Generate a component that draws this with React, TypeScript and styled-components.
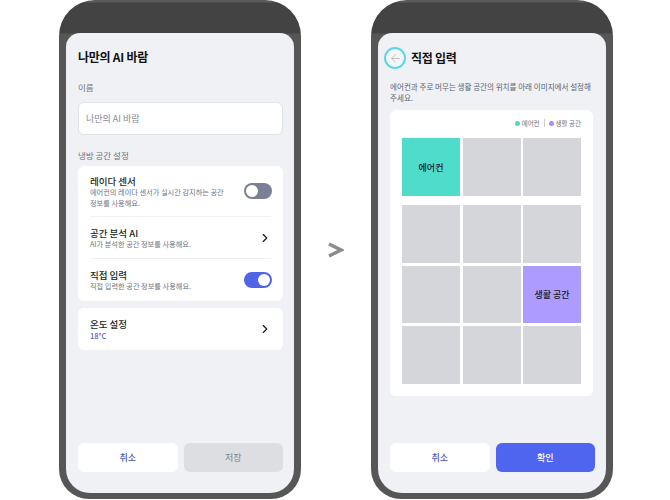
import React from "react";
import styled, { createGlobalStyle } from "styled-components";
import { ChevronRight, ArrowLeft } from "lucide-react";

const GlobalStyle = createGlobalStyle`
  html, body {
    margin: 0;
    padding: 0;
    background: #fff;
    overflow: hidden;
  }
  * {
    box-sizing: border-box;
  }
  body {
    font-family: "Noto Sans CJK KR", "Noto Sans", sans-serif;
    color: #16181d;
  }
`;

const Page = styled.div`
  width: 670px;
  height: 500px;
  display: flex;
  align-items: flex-start;
  padding-left: 59px;
  overflow: hidden;
`;

const Phone = styled.div`
  width: 242px;
  height: 499px;
  flex-shrink: 0;
  padding: 33px 7px 6px;
  border-radius: 36px 36px 30px 30px;
  background: linear-gradient(#5a5a5a 0, #5a5a5a 2px, #434343 3px, #434343 33px, #565656 34px);
`;

const Screen = styled.div`
  height: 460px;
  background: #eff1f5;
  border-radius: 14px 14px 24px 24px;
  display: flex;
  flex-direction: column;
  padding: 0 11px 21px 12px;
`;

const ArrowSlot = styled.div`
  width: 70px;
  height: 500px;
  flex-shrink: 0;
  display: flex;
  align-items: center;
  justify-content: center;
  color: #8c8c8c;
`;

const Title = styled.h1`
  margin: 0;
  font-size: 12px;
  line-height: 18px;
  font-weight: 700;
  letter-spacing: -0.25px;
  color: #111;
`;

const PlainHeader = styled.div`
  padding-top: 15px;
`;

const BackHeader = styled.div`
  display: flex;
  align-items: center;
  gap: 5px;
  margin: 14px 0 0 -6px;
`;

const BackRing = styled.div`
  width: 22px;
  height: 22px;
  border-radius: 50%;
  border: 2.5px solid #5fd6e4;
  background: #f4f7fa;
  color: #a8a2a0;
  display: flex;
  align-items: center;
  justify-content: center;
`;

const Label = styled.div<{ $top: number }>`
  margin-top: ${({ $top }) => $top}px;
  font-size: 8.5px;
  line-height: 12px;
  color: #6d7480;
`;

const NameInput = styled.div`
  margin-top: 9px;
  height: 33px;
  background: #fff;
  border: 1px solid #dfe2e8;
  border-radius: 6px;
  display: flex;
  align-items: center;
  padding-left: 7px;
  font-size: 9px;
  color: #858a94;
`;

const Card = styled.div<{ $top: number }>`
  margin-top: ${({ $top }) => $top}px;
  background: #fff;
  border-radius: 6px;
  padding: 0 12px;
`;

const Row = styled.div<{ $height: number; $divider?: boolean }>`
  height: ${({ $height }) => $height}px;
  display: flex;
  align-items: center;
  justify-content: space-between;
  border-bottom: ${({ $divider }) => ($divider ? "1px solid #f0f1f4" : "none")};
`;

const RowText = styled.div`
  width: 156px;
  display: flex;
  flex-direction: column;
`;

const RowTitle = styled.div`
  margin: 1px 0 -1px;
  font-size: 9.5px;
  line-height: 13px;
  font-weight: 500;
  color: #1c1e24;
`;

const RowDesc = styled.div`
  font-size: 7.2px;
  line-height: 10.5px;
  color: #6f7580;
  white-space: pre-line;
`;

const RowValue = styled.div`
  font-size: 7.5px;
  line-height: 11px;
  font-weight: 500;
  color: #4f5fd0;
`;

const Toggle = styled.div<{ $on?: boolean }>`
  width: 28px;
  height: 16px;
  margin-right: -0.5px;
  padding: 2px;
  border-radius: 8px;
  background: ${({ $on }) => ($on ? "#4f65e6" : "#7b8194")};
  display: flex;
  justify-content: ${({ $on }) => ($on ? "flex-end" : "flex-start")};

  &::after {
    content: "";
    width: 12px;
    height: 12px;
    border-radius: 50%;
    background: #fff;
  }
`;

const Chevron = styled(ChevronRight)`
  margin-right: -1px;
  color: #16181d;
`;

const Buttons = styled.div`
  margin-top: auto;
  display: grid;
  grid-template-columns: 1fr 1fr;
  gap: 6px;
`;

const Btn = styled.div<{ $kind: "cancel" | "off" | "ok" }>`
  height: 29px;
  border-radius: 6px;
  display: flex;
  align-items: center;
  justify-content: center;
  font-size: 9px;
  font-weight: ${({ $kind }) => ($kind === "off" ? 400 : 500)};
  background: ${({ $kind }) =>
    $kind === "cancel" ? "#fff" : $kind === "off" ? "#dcdee2" : "#4f65f0"};
  color: ${({ $kind }) =>
    $kind === "cancel" ? "#4f5cb8" : $kind === "off" ? "#7e8289" : "#fff"};
`;

const Intro = styled.p`
  margin: 13px 0 0;
  font-size: 7.55px;
  line-height: 10.5px;
  color: #5e6470;
  white-space: pre;
`;

const MapCard = styled.div`
  margin-top: 7px;
  margin-right: 2px;
  height: 286px;
  background: #fff;
  border-radius: 6px;
  padding: 7px 12px 0;
`;

const Legend = styled.div`
  height: 12px;
  display: flex;
  align-items: center;
  justify-content: flex-end;
  gap: 2px;
  font-size: 6.5px;
  color: #6d7480;
`;

const Dot = styled.span<{ $color: string }>`
  width: 5px;
  height: 5px;
  border-radius: 50%;
  background: ${({ $color }) => $color};
`;

const Sep = styled.span`
  width: 1px;
  height: 8px;
  margin: 0 2px;
  background: #c9ccd2;
`;

const Grid = styled.div<{ $top: number; $rowHeight: number }>`
  margin-top: ${({ $top }) => $top}px;
  display: grid;
  grid-template-columns: repeat(3, 58px);
  grid-auto-rows: ${({ $rowHeight }) => $rowHeight}px;
  gap: 3px 2.5px;
`;

const Cell = styled.div<{ $fill?: string }>`
  background: ${({ $fill }) => $fill || "#d5d6d9"};
  display: flex;
  align-items: center;
  justify-content: center;
  font-size: 9px;
  font-weight: 500;
  color: #17171f;
`;

export default function App() {
  return (
    <Page>
      <GlobalStyle />
      <Phone>
        <Screen>
          <PlainHeader>
            <Title>나만의 AI 바람</Title>
          </PlainHeader>
          <Label $top={15}>이름</Label>
          <NameInput>나만의 AI 바람</NameInput>
          <Label $top={14}>냉방 공간 설정</Label>
          <Card $top={5}>
            <Row $height={51} $divider>
              <RowText>
                <RowTitle>레이다 센서</RowTitle>
                <RowDesc>{"에어컨의 레이다 센서가 실시간 감지하는 공간\n정보를 사용해요."}</RowDesc>
              </RowText>
              <Toggle />
            </Row>
            <Row $height={42} $divider>
              <RowText>
                <RowTitle>공간 분석 AI</RowTitle>
                <RowDesc>AI가 분석한 공간 정보를 사용해요.</RowDesc>
              </RowText>
              <Chevron size={14} strokeWidth={2} />
            </Row>
            <Row $height={42}>
              <RowText>
                <RowTitle>직접 입력</RowTitle>
                <RowDesc>직접 입력한 공간 정보를 사용해요.</RowDesc>
              </RowText>
              <Toggle $on />
            </Row>
          </Card>
          <Card $top={7}>
            <Row $height={42}>
              <RowText>
                <RowTitle>온도 설정</RowTitle>
                <RowValue>18°C</RowValue>
              </RowText>
              <Chevron size={14} strokeWidth={2} />
            </Row>
          </Card>
          <Buttons>
            <Btn $kind="cancel">취소</Btn>
            <Btn $kind="off">저장</Btn>
          </Buttons>
        </Screen>
      </Phone>
      <ArrowSlot>
        <svg width="16" height="16" viewBox="0 0 16 16" fill="none">
          <path d="M1 2 L13 8 L1 14" stroke="currentColor" strokeWidth="3.4" />
        </svg>
      </ArrowSlot>
      <Phone>
        <Screen>
          <BackHeader>
            <BackRing>
              <ArrowLeft size={13} strokeWidth={1.2} />
            </BackRing>
            <Title>직접 입력</Title>
          </BackHeader>
          <Intro>{"에어컨과 주로 머무는 생활 공간의 위치를 아래 이미지에서 설정해\n주세요."}</Intro>
          <MapCard>
            <Legend>
              <Dot $color="#4fd8c8" />
              <span>에어컨</span>
              <Sep />
              <Dot $color="#a78ef0" />
              <span>생활 공간</span>
            </Legend>
            <Grid $top={9} $rowHeight={58}>
              <Cell $fill="#4fdccb">에어컨</Cell>
              <Cell />
              <Cell />
            </Grid>
            <Grid $top={9} $rowHeight={57.7}>
              <Cell />
              <Cell />
              <Cell />
              <Cell />
              <Cell />
              <Cell $fill="#ad9bff">생활 공간</Cell>
              <Cell />
              <Cell />
              <Cell />
            </Grid>
          </MapCard>
          <Buttons>
            <Btn $kind="cancel">취소</Btn>
            <Btn $kind="ok">확인</Btn>
          </Buttons>
        </Screen>
      </Phone>
    </Page>
  );
}
